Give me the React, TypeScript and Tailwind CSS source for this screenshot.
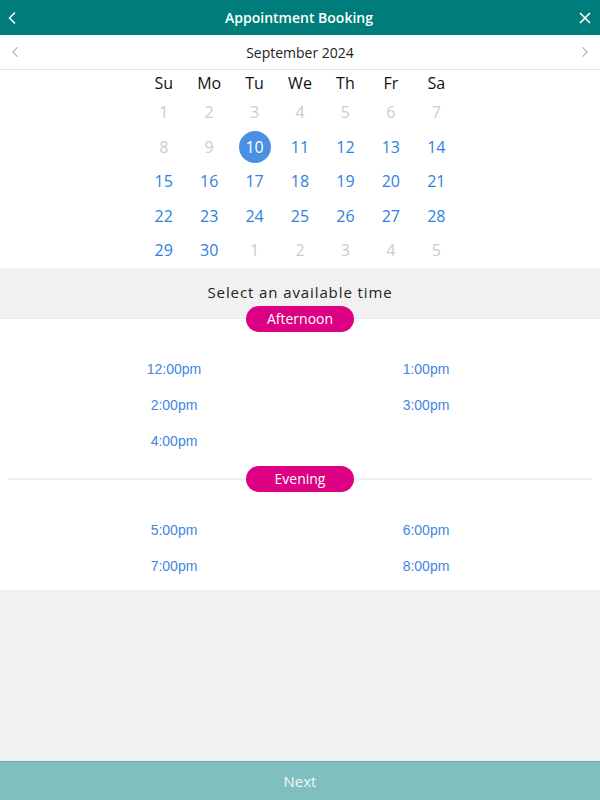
import { ChevronLeft, ChevronRight, X } from 'lucide-react'

const WEEKDAYS = ['Su', 'Mo', 'Tu', 'We', 'Th', 'Fr', 'Sa']

type Day = { n: number; state: 'off' | 'on' | 'selected' }

const DAYS: Day[] = [
  ...[1, 2, 3, 4, 5, 6, 7, 8, 9].map(n => ({ n, state: 'off' as const })),
  { n: 10, state: 'selected' },
  ...Array.from({ length: 20 }, (_, i) => ({ n: i + 11, state: 'on' as const })),
  ...[1, 2, 3, 4, 5].map(n => ({ n, state: 'off' as const })),
]

const AFTERNOON = ['12:00pm', '1:00pm', '2:00pm', '3:00pm', '4:00pm']
const EVENING = ['5:00pm', '6:00pm', '7:00pm', '8:00pm']

function Pill({ label }: { label: string }) {
  return (
    <span className="relative z-10 flex h-[26px] w-[108px] items-center justify-center rounded-full bg-[#dc0082] text-[14px] text-white">
      {label}
    </span>
  )
}

function Slots({ times }: { times: string[] }) {
  return (
    <div className="grid grid-cols-2 gap-y-[14px] px-12 font-['Liberation_Sans',Arial,sans-serif] text-[14px] text-[#3f86e2]">
      {times.map(t => (
        <button key={t} type="button" className="h-[22px] text-center">
          {t}
        </button>
      ))}
    </div>
  )
}

export default function App() {
  return (
    <div className="flex h-[800px] w-[600px] flex-col bg-[#f1f1f1] font-['Open_Sans',sans-serif]">
      <header className="flex h-[35px] items-center justify-between bg-[#007d7a] pl-[2px] pr-[6px] text-white">
        <ChevronLeft size={20} strokeWidth={2} />
        <h1 className="text-[14px] font-semibold">Appointment Booking</h1>
        <X size={18} strokeWidth={2.2} />
      </header>

      <div className="flex h-[35px] items-center justify-between border-b border-[#e4e4e4] bg-white px-[6px]">
        <ChevronLeft size={18} strokeWidth={1.3} className="text-[#8a8a8a]" />
        <span className="text-[14px] text-[#222]">September 2024</span>
        <ChevronRight size={18} strokeWidth={1.3} className="text-[#8a8a8a]" />
      </div>

      <div className="bg-white pt-px">
        <div className="mx-auto grid w-[318px] grid-cols-7 text-center text-[16px]">
          {WEEKDAYS.map(d => (
            <span key={d} className="flex h-[24px] items-center justify-center text-[#111]">
              {d}
            </span>
          ))}
          {DAYS.map((d, i) => (
            <span key={i} className="flex h-[34.5px] items-center justify-center">
              {d.state === 'selected' ? (
                <span className="flex h-[32px] w-[32px] items-center justify-center rounded-full bg-[#4a8fe2] text-white">
                  {d.n}
                </span>
              ) : (
                <span className={d.state === 'off' ? 'text-[#c8cdd0]' : 'text-[#2f7fe0]'}>{d.n}</span>
              )}
            </span>
          ))}
        </div>
      </div>

      <div className="flex h-[50px] flex-col items-center justify-center text-[15px] tracking-[0.06em] text-[#222]">
        Select an available time
      </div>

      <div className="bg-white border-t border-[#e6eaee]">
        <div className="-mt-[13px] flex justify-center">
          <Pill label="Afternoon" />
        </div>
        <div className="pt-[27px] pb-[13px]">
          <Slots times={AFTERNOON} />
        </div>

        <div className="relative flex h-[26px] items-center justify-center">
          <div className="absolute inset-x-2 top-1/2 h-[2px] -translate-y-1/2 bg-[#edf1f4]" />
          <Pill label="Evening" />
        </div>
        <div className="pt-[28px] pb-[12px]">
          <Slots times={EVENING} />
        </div>
      </div>

      <div className="flex-1" />

      <button
        type="button"
        className="h-[39px] w-full border-t border-[#72aaa9] bg-[#80bfbf] text-[15px] text-[#eef8f8]"
      >
        Next
      </button>
    </div>
  )
}
